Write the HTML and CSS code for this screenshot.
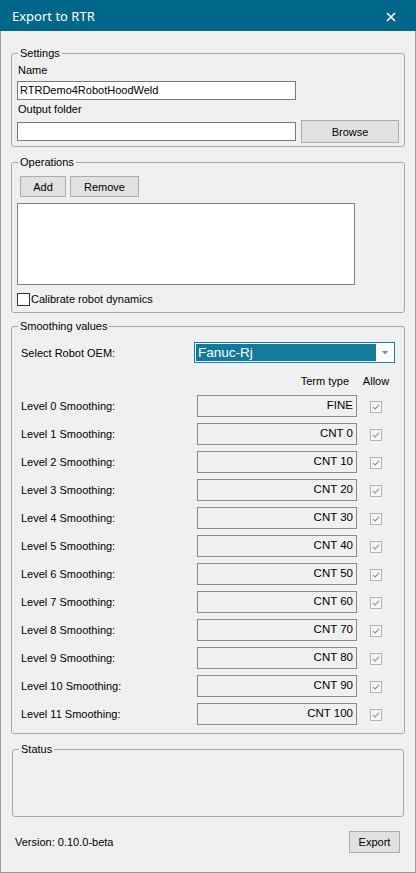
FILE: index.html
```html
<!DOCTYPE html>
<html lang="en">
<head>
<meta charset="utf-8">
<title>Export to RTR</title>
<link rel="stylesheet" href="styles.css">
</head>
<body>
<div class="window">
  <div class="titlebar">
    <span class="title">Export to RTR</span>
    <svg class="close" width="10" height="10" viewBox="0 0 10 10" aria-label="Close">
      <path d="M1 1 L9 9 M9 1 L1 9" stroke="#fff" stroke-width="1.7" fill="none"/>
    </svg>
  </div>

  <div class="client">
    <fieldset class="group settings">
      <legend>Settings</legend>
      <div class="label">Name</div>
      <div class="textbox name-box">RTRDemo4RobotHoodWeld</div>
      <div class="label output-label">Output folder</div>
      <div class="folder-row">
        <div class="textbox folder-box"></div>
        <div class="button browse">Browse</div>
      </div>
    </fieldset>

    <fieldset class="group operations">
      <legend>Operations</legend>
      <div class="op-buttons">
        <div class="button add">Add</div>
        <div class="button remove">Remove</div>
      </div>
      <div class="listbox"></div>
      <div class="check-row">
        <span class="checkbox"></span>
        <span>Calibrate robot dynamics</span>
      </div>
    </fieldset>

    <fieldset class="group smoothing">
      <legend>Smoothing values</legend>
      <div class="oem-row">
        <span class="oem-label">Select Robot OEM:</span>
        <div class="combo">
          <span class="combo-value">Fanuc-Rj</span>
          <span class="combo-arrow">
            <svg width="6" height="4" viewBox="0 0 6 4"><polygon points="0,0 6,0 3,3.5" fill="#8a8a8a"/></svg>
          </span>
        </div>
      </div>

      <div class="levels">
        <span></span>
        <span class="col-head term-head">Term type</span>
        <span class="col-head allow-head">Allow</span>

        <span class="level-label">Level 0 Smoothing:</span>
        <span class="readonly">FINE</span>
        <span class="checkbox disabled"><svg viewBox="0 0 12 12"><polyline points="2.5,6 5,8.5 9.5,3.5"/></svg></span>

        <span class="level-label">Level 1 Smoothing:</span>
        <span class="readonly">CNT 0</span>
        <span class="checkbox disabled"><svg viewBox="0 0 12 12"><polyline points="2.5,6 5,8.5 9.5,3.5"/></svg></span>

        <span class="level-label">Level 2 Smoothing:</span>
        <span class="readonly">CNT 10</span>
        <span class="checkbox disabled"><svg viewBox="0 0 12 12"><polyline points="2.5,6 5,8.5 9.5,3.5"/></svg></span>

        <span class="level-label">Level 3 Smoothing:</span>
        <span class="readonly">CNT 20</span>
        <span class="checkbox disabled"><svg viewBox="0 0 12 12"><polyline points="2.5,6 5,8.5 9.5,3.5"/></svg></span>

        <span class="level-label">Level 4 Smoothing:</span>
        <span class="readonly">CNT 30</span>
        <span class="checkbox disabled"><svg viewBox="0 0 12 12"><polyline points="2.5,6 5,8.5 9.5,3.5"/></svg></span>

        <span class="level-label">Level 5 Smoothing:</span>
        <span class="readonly">CNT 40</span>
        <span class="checkbox disabled"><svg viewBox="0 0 12 12"><polyline points="2.5,6 5,8.5 9.5,3.5"/></svg></span>

        <span class="level-label">Level 6 Smoothing:</span>
        <span class="readonly">CNT 50</span>
        <span class="checkbox disabled"><svg viewBox="0 0 12 12"><polyline points="2.5,6 5,8.5 9.5,3.5"/></svg></span>

        <span class="level-label">Level 7 Smoothing:</span>
        <span class="readonly">CNT 60</span>
        <span class="checkbox disabled"><svg viewBox="0 0 12 12"><polyline points="2.5,6 5,8.5 9.5,3.5"/></svg></span>

        <span class="level-label">Level 8 Smoothing:</span>
        <span class="readonly">CNT 70</span>
        <span class="checkbox disabled"><svg viewBox="0 0 12 12"><polyline points="2.5,6 5,8.5 9.5,3.5"/></svg></span>

        <span class="level-label">Level 9 Smoothing:</span>
        <span class="readonly">CNT 80</span>
        <span class="checkbox disabled"><svg viewBox="0 0 12 12"><polyline points="2.5,6 5,8.5 9.5,3.5"/></svg></span>

        <span class="level-label">Level 10 Smoothing:</span>
        <span class="readonly">CNT 90</span>
        <span class="checkbox disabled"><svg viewBox="0 0 12 12"><polyline points="2.5,6 5,8.5 9.5,3.5"/></svg></span>

        <span class="level-label">Level 11 Smoothing:</span>
        <span class="readonly">CNT 100</span>
        <span class="checkbox disabled"><svg viewBox="0 0 12 12"><polyline points="2.5,6 5,8.5 9.5,3.5"/></svg></span>
      </div>
    </fieldset>

    <fieldset class="group status">
      <legend>Status</legend>
      <div class="status-body"></div>
    </fieldset>

    <div class="footer">
      <span class="version">Version: 0.10.0-beta</span>
      <div class="button export">Export</div>
    </div>
  </div>
</div>
</body>
</html>
```

FILE: styles.css
```css
* {
  box-sizing: border-box;
}

html,
body {
  margin: 0;
  padding: 0;
}

body {
  width: 416px;
  height: 873px;
  background: #f0f0f0;
  color: #000;
  font-family: "Liberation Sans", Arial, sans-serif;
  font-size: 11px;
}

.window {
  width: 416px;
  height: 873px;
  display: flex;
  flex-direction: column;
}

/* Title bar */
.titlebar {
  height: 31px;
  flex: none;
  background: #00678b;
  color: #fff;
  display: flex;
  align-items: center;
  padding-left: 12px;
  font-family: "Noto Sans", "Open Sans", sans-serif;
  font-size: 13px;
}

.title {
  flex: 1;
  padding-top: 1px;
}

.close {
  margin-right: 20px;
  margin-top: 2px;
}

/* Client area */
.client {
  flex: 1;
  display: flex;
  flex-direction: column;
  border: 1px solid #9a9a9a;
  border-top: 0;
  padding-top: 15px;
}

/* Group boxes */
.group {
  margin: 0 10px;
  padding: 3px 5px;
  border: 1px solid #a6a6a6;
  border-radius: 3px;
  min-width: 0;
}

.group legend {
  padding: 0 2px;
  margin-left: 1px;
  line-height: 14px;
}

.label {
  line-height: 14px;
  padding-left: 1px;
}

.textbox {
  height: 19px;
  background: #fff;
  border: 1px solid #7a7a7a;
  line-height: 17px;
  padding-left: 2px;
  white-space: nowrap;
}

.button {
  background: #e1e1e1;
  border: 1px solid #adadad;
  display: flex;
  align-items: center;
  justify-content: center;
}

/* Settings */
.name-box {
  margin-top: 4px;
  width: 279px;
}

.output-label {
  margin-top: 2px;
}

.folder-row {
  margin-top: 4px;
  display: flex;
  align-items: center;
  gap: 5px;
}

.folder-box {
  width: 279px;
}

.browse {
  width: 98px;
  height: 23px;
}

/* Operations */
.operations {
  margin-top: 8px;
  padding: 7px 5px 6px;
}

.op-buttons {
  display: flex;
  gap: 4px;
  margin-left: 3px;
}

.add {
  width: 46px;
  height: 21px;
}

.remove {
  width: 69px;
  height: 21px;
}

.listbox {
  margin-top: 6px;
  width: 338px;
  height: 82px;
  background: #fff;
  border: 1px solid #828282;
}

.check-row {
  margin-top: 8px;
  height: 13px;
  display: flex;
  align-items: center;
  line-height: 13px;
}

.checkbox {
  width: 13px;
  height: 13px;
  flex: none;
  background: #fff;
  border: 1px solid #333;
  display: block;
}

.check-row .checkbox {
  margin-right: 1px;
}

/* Smoothing values */
.smoothing {
  margin-top: 6px;
  padding: 9px 5px 8px;
}

.oem-row {
  display: flex;
  align-items: center;
  padding-left: 4px;
}

.oem-label {
  width: 173px;
}

.combo {
  width: 201px;
  height: 21px;
  display: flex;
  border: 1px solid #1a7fa4;
  background: #fff;
  padding: 1px;
}

.combo-value {
  flex: 1;
  background: #13799d;
  color: #fff;
  font-size: 13.5px;
  line-height: 17px;
  padding-left: 2px;
}

.combo-arrow {
  width: 17px;
  display: flex;
  align-items: center;
  justify-content: center;
}

.levels {
  margin-top: 12px;
  padding-left: 4px;
  display: grid;
  grid-template-columns: 163px 160px 12px;
  column-gap: 13px;
  grid-template-rows: 14px;
  grid-auto-rows: 22px;
  row-gap: 6px;
  align-items: center;
}

.col-head {
  line-height: 14px;
  margin-bottom: 3px;
}

.term-head {
  text-align: right;
  padding-right: 8px;
}

.allow-head {
  display: flex;
  justify-content: center;
  white-space: nowrap;
}

.readonly {
  height: 22px;
  background: #f0f0f0;
  border: 1px solid #8a8a8a;
  text-align: right;
  padding-right: 3px;
  line-height: 18px;
  font-size: 11.5px;
}

.checkbox.disabled {
  width: 12px;
  height: 12px;
  margin-top: 1px;
  background: #f6f6f6;
  border-color: #b4b4b4;
}

.checkbox.disabled svg {
  display: block;
  width: 10px;
  height: 10px;
}

.checkbox.disabled polyline {
  fill: none;
  stroke: #8c8c8c;
  stroke-width: 1.3;
}

/* Status */
.status {
  margin: 8px 11px 0;
  padding: 0 5px;
}

.status-body {
  height: 60px;
}

/* Footer */
.footer {
  margin-top: 14px;
  display: flex;
  align-items: center;
  justify-content: space-between;
  padding: 0 15px 0 14px;
}

.version {
  margin-top: -1px;
}

.export {
  width: 51px;
  height: 22px;
}
```
